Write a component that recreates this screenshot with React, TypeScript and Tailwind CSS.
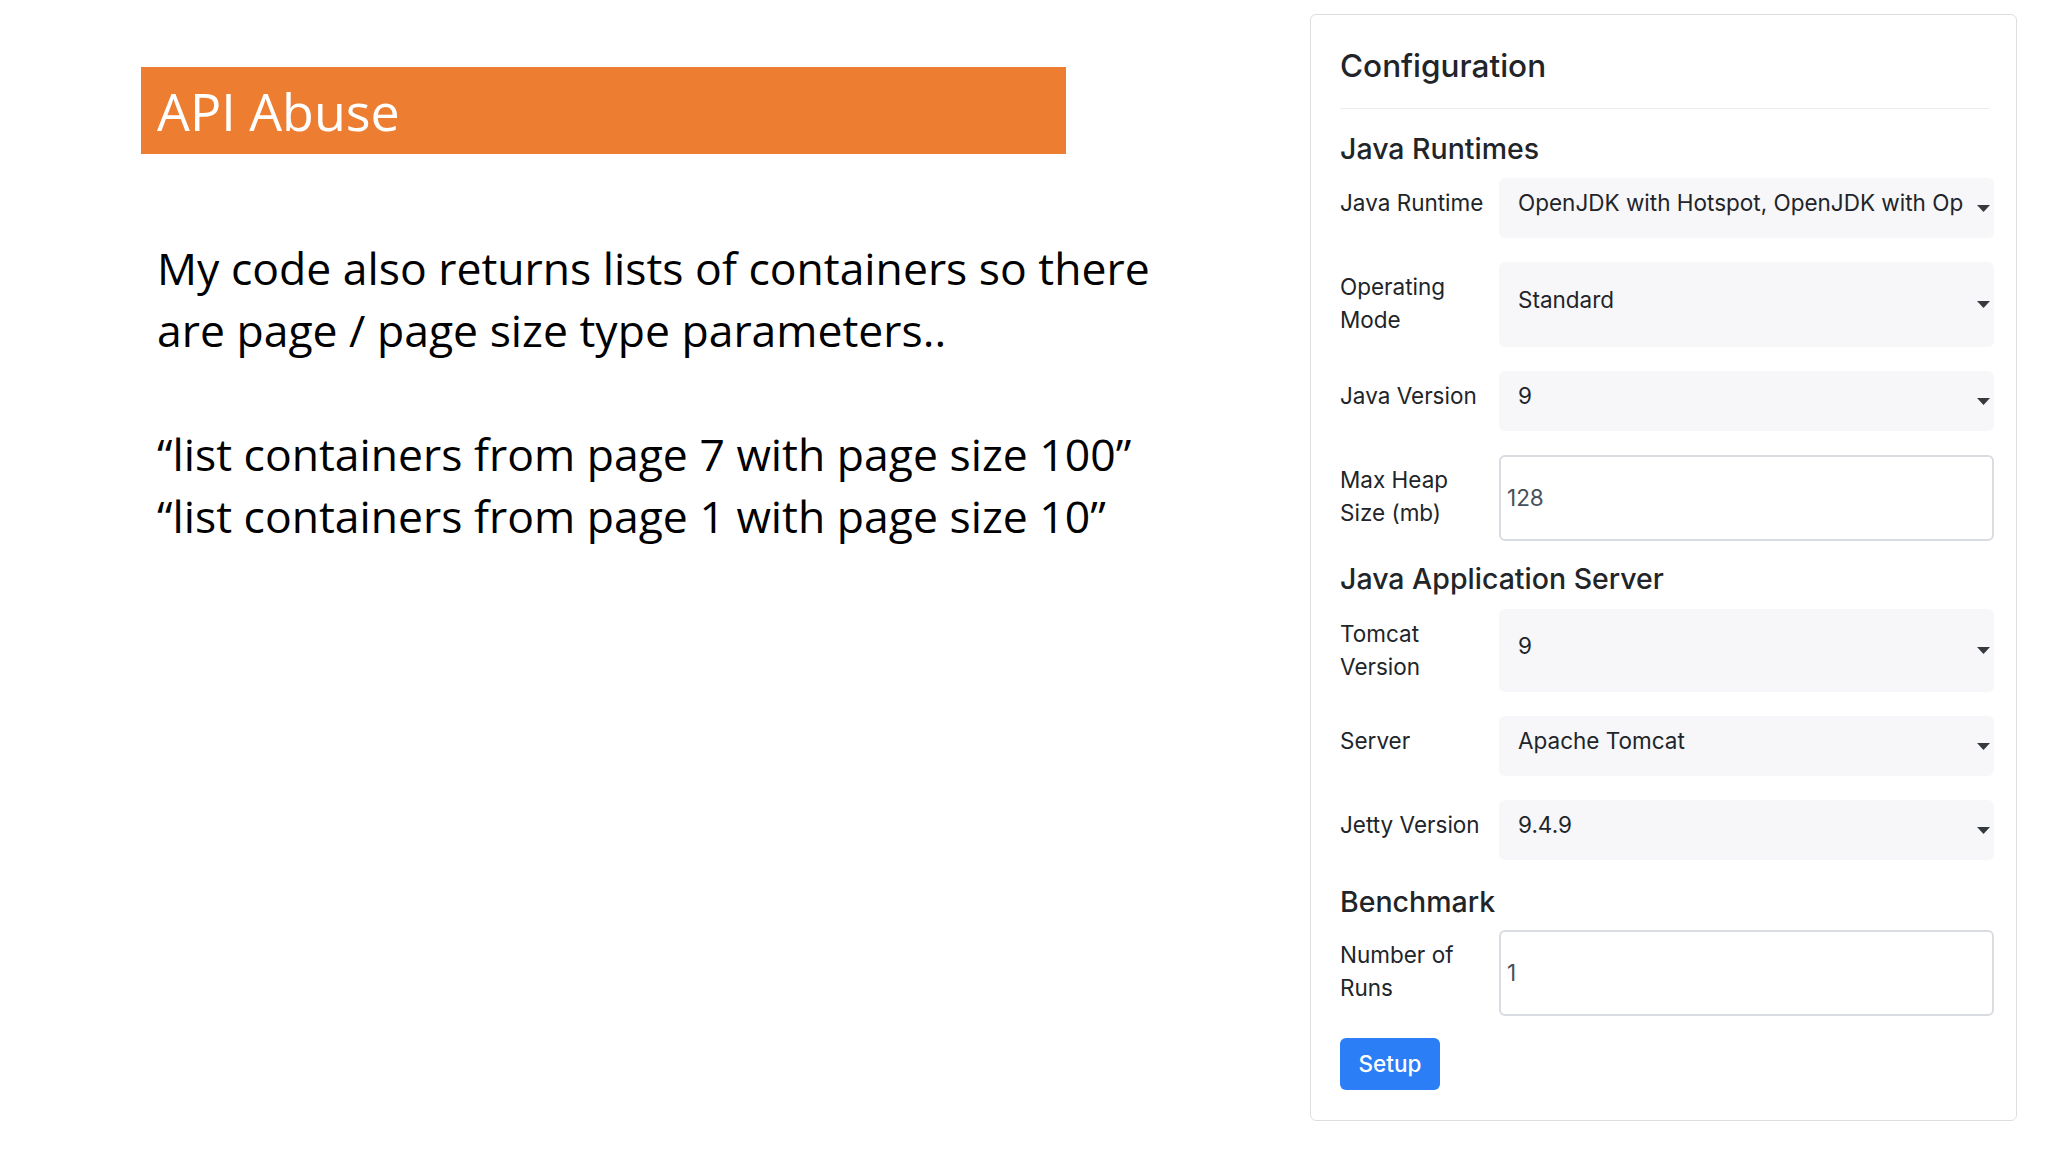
import React from "react";

function Caret() {
  return (
    <svg width="13" height="7" viewBox="0 0 13 7" className="shrink-0">
      <path d="M0 0h13L6.5 7z" fill="#343a40" />
    </svg>
  );
}

function FieldLabel({ lines }: { lines: string[] }) {
  return (
    <div className="w-[159px] shrink-0 pt-[8px] text-[22.5px] leading-[33px] text-[#212529]">
      {lines.map((line) => (
        <div key={line}>{line}</div>
      ))}
    </div>
  );
}

function SelectRow({ label, value, height }: { label: string[]; value: string; height?: string }) {
  return (
    <div className={"flex " + (height ?? "h-[60px]")}>
      <FieldLabel lines={label} />
      <div className="flex flex-1 items-center rounded-[6px] bg-[#f7f7f9] pl-[19px] pr-[4px]">
        <span className="flex-1 overflow-hidden whitespace-nowrap pb-[10px] text-[22.5px] text-[#212529]">
          {value}
        </span>
        <Caret />
      </div>
    </div>
  );
}

function InputRow({ label, value }: { label: string[]; value: string }) {
  return (
    <div className="flex h-[86px]">
      <FieldLabel lines={label} />
      <div className="flex flex-1 items-center rounded-[6px] border-2 border-[#d9dce0] bg-white pl-[6px] text-[22.5px] text-[#495057]">
        {value}
      </div>
    </div>
  );
}

function SectionHeading({ children, className }: { children: React.ReactNode; className: string }) {
  return <h5 className={"text-[28.5px] font-medium leading-[40px] " + className}>{children}</h5>;
}

export default function App() {
  return (
    <div className="flex h-[1152px] w-[2048px] overflow-hidden bg-white">
      {/* slide */}
      <div className="flex-1 pl-[141px] pt-[67px] font-['Open_Sans',sans-serif]">
        <div className="flex h-[87px] w-[925px] items-center bg-[#ed7d31] pl-[16px] text-[52px] text-white">
          API Abuse
        </div>
        <div className="mt-[83px] pl-[16px] text-[44.5px] leading-[62px] text-black">
          <p>My code also returns lists of containers so there</p>
          <p>are page / page size type parameters..</p>
          <p className="mt-[62px]">“list containers from page 7 with page size 100”</p>
          <p>“list containers from page 1 with page size 10”</p>
        </div>
      </div>

      {/* configuration card */}
      <div className="mr-[31px] mt-[14px] w-[707px] self-start rounded-[6px] border border-[#dedede] bg-white pb-[30px] pl-[29px] pr-[22px] pt-[29px] font-['Inter',sans-serif] text-[#212529]">
        <h4 className="text-[31.5px] font-medium leading-[44px]">Configuration</h4>
        <div className="mr-[5px] mt-[20px] border-t border-[#e9ecef]" />

        <SectionHeading className="mb-[9px] mt-[20px]">Java Runtimes</SectionHeading>
        <div className="flex flex-col gap-[24px]">
          <SelectRow label={["Java Runtime"]} value="OpenJDK with Hotspot, OpenJDK with Op" />
          <SelectRow label={["Operating", "Mode"]} value="Standard" height="h-[85px]" />
          <SelectRow label={["Java Version"]} value="9" />
          <InputRow label={["Max Heap", "Size (mb)"]} value="128" />
        </div>

        <SectionHeading className="mb-[10px] mt-[18px]">Java Application Server</SectionHeading>
        <div className="flex flex-col gap-[24px]">
          <SelectRow label={["Tomcat", "Version"]} value="9" height="h-[83px]" />
          <SelectRow label={["Server"]} value="Apache Tomcat" />
          <SelectRow label={["Jetty Version"]} value="9.4.9" />
        </div>

        <SectionHeading className="mb-[8px] mt-[22px]">Benchmark</SectionHeading>
        <InputRow label={["Number of", "Runs"]} value="1" />

        <button className="mt-[22px] h-[52px] w-[100px] rounded-[6px] bg-[#2b7ef6] text-[22.5px] font-medium text-white">
          Setup
        </button>
      </div>
    </div>
  );
}
